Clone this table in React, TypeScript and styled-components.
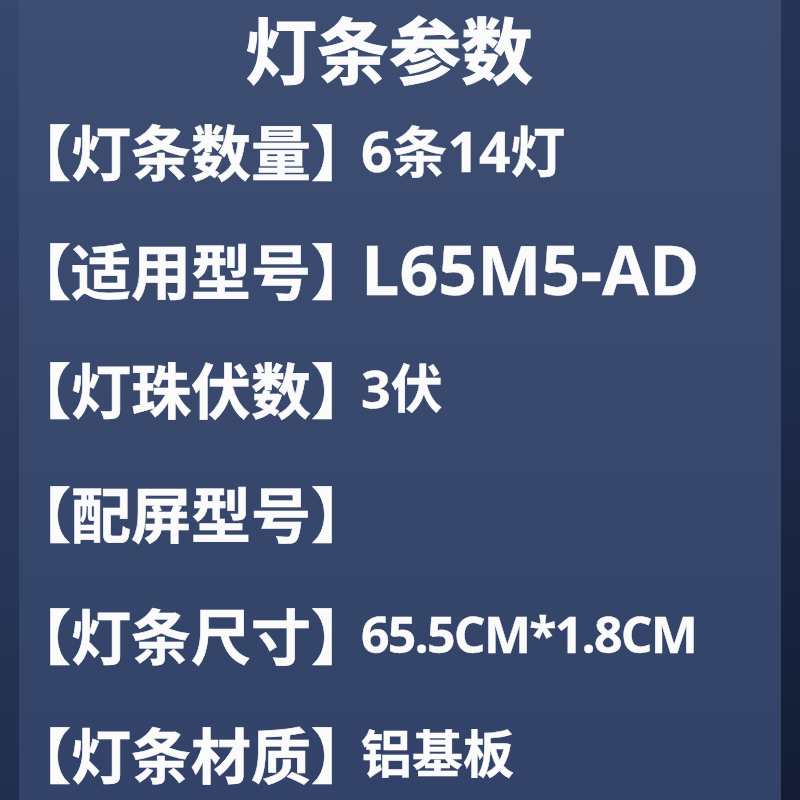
import styled, { createGlobalStyle } from 'styled-components';

const GlobalStyle = createGlobalStyle`
    html, body {
        margin: 0;
        padding: 0;
        background: #2b3a5c;
    }
    * {
        box-sizing: border-box;
    }
`;

const Page = styled.div`
    display: flex;
    width: 800px;
    height: 800px;
    overflow: hidden;
    font-family: "Open Sans", "Noto Sans CJK SC", sans-serif;
    font-weight: 700;
    color: #fbfbfb;
`;

const Edge = styled.div<{ $side: 'left' | 'right' }>`
    flex: 0 0 19px;
    background: ${p => p.$side === 'left'
        ? 'linear-gradient(180deg, #37486e 0%, #2c3b5e 50%, #212e4d 100%)'
        : 'linear-gradient(180deg, #263557 0%, #1d2a48 50%, #131c34 100%)'};
`;

const Panel = styled.div`
    flex: 1;
    display: flex;
    flex-direction: column;
    background: linear-gradient(180deg, #3d4e72 0%, #38496d 50%, #324268 100%);
`;

const Title = styled.h1`
    margin: 0;
    padding: 4px 22px 0 0;
    font-family: "Noto Sans CJK SC", sans-serif;
    font-size: 72px;
    line-height: 86px;
    font-weight: 700;
    text-align: center;
    -webkit-text-stroke: 1px #fbfbfb;
`;

const Row = styled.div<{ $h: number }>`
    display: flex;
    flex: 0 0 ${p => p.$h}px;
    align-items: center;
    white-space: nowrap;
`;

const Label = styled.span`
    margin-left: -8px;
    font-family: "Noto Sans CJK SC", sans-serif;
    font-size: 60px;
    line-height: 1;
    -webkit-text-stroke: 0.6px #fbfbfb;
`;

// the closing bracket's blank right half is trimmed so the value sits close to it
const Close = styled.span`
    letter-spacing: -10px;
`;

const Value = styled.span<{ $size: number; $tight?: number }>`
    font-size: ${p => p.$size}px;
    letter-spacing: ${p => p.$tight ?? 0}px;
    line-height: 1;
    -webkit-text-stroke: 0.4px #fbfbfb;
`;

type Param = { label: string; value: string; size: number; tight?: number; h: number };

const params: Param[] = [
    { label: '灯条数量', value: '6条14灯', size: 55, h: 120 },
    { label: '适用型号', value: 'L65M5-AD', size: 68, h: 118 },
    { label: '灯珠伏数', value: '3伏', size: 52, h: 120 },
    { label: '配屏型号', value: '', size: 50, h: 128 },
    { label: '灯条尺寸', value: '65.5CM*1.8CM', size: 50, tight: -1.8, h: 116 },
    { label: '灯条材质', value: '铝基板', size: 51, h: 122 },
];

export default function App() {
    return (
        <>
            <GlobalStyle />
            <Page>
                <Edge $side="left" />
                <Panel>
                    <Title>灯条参数</Title>
                    {params.map(item => (
                        <Row key={item.label} $h={item.h}>
                            <Label>【{item.label}<Close>】</Close></Label>
                            <Value $size={item.size} $tight={item.tight}>{item.value}</Value>
                        </Row>
                    ))}
                </Panel>
                <Edge $side="right" />
            </Page>
        </>
    );
}
